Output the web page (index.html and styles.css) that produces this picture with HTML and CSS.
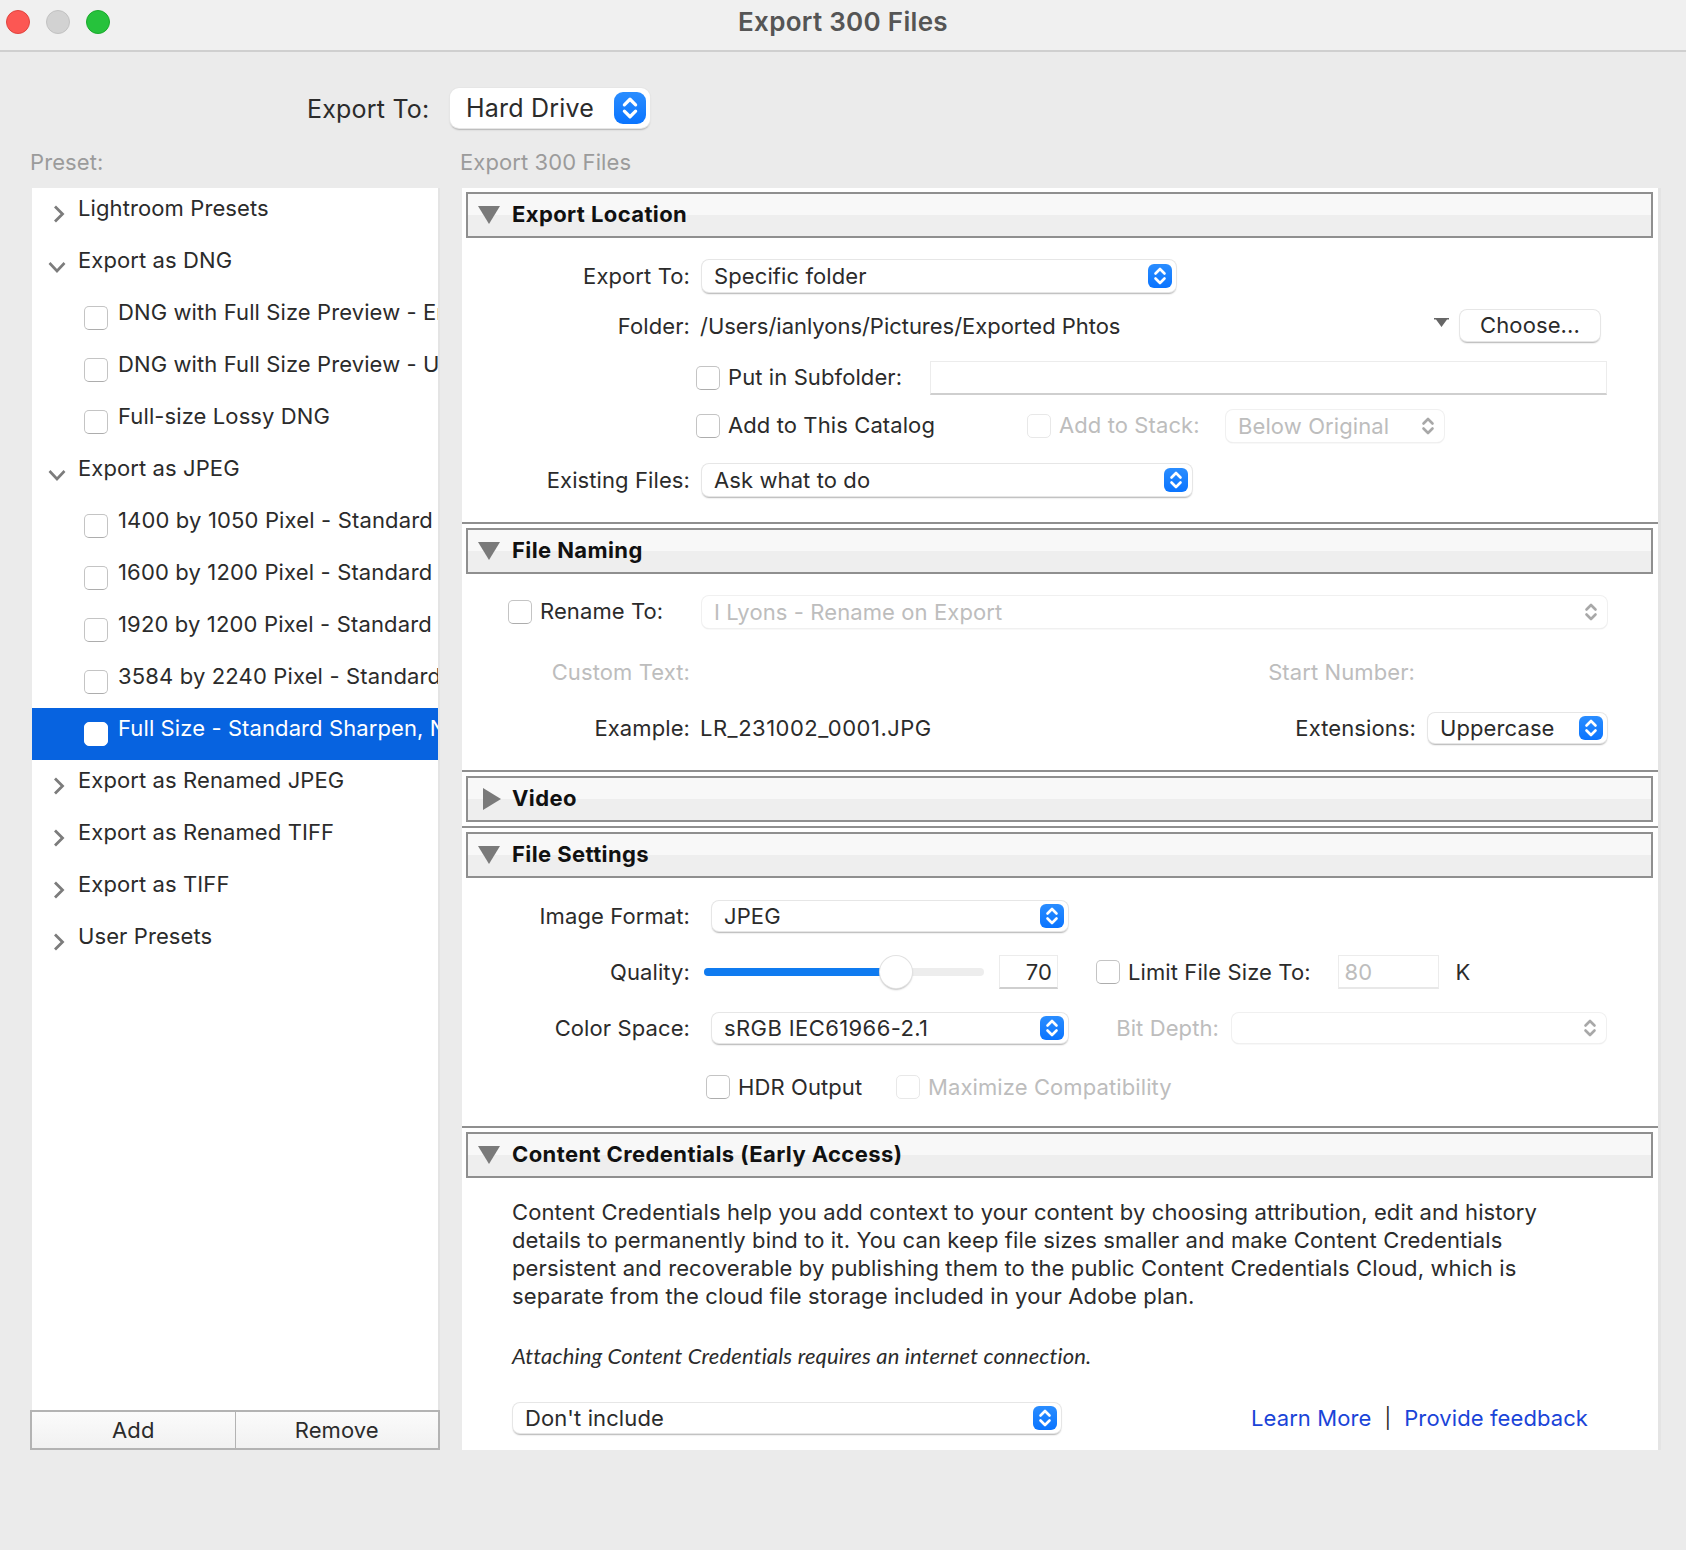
FILE: index.html
```html
<!DOCTYPE html>
<html lang="en">
<head>
<meta charset="utf-8">
<title>Export 300 Files</title>
<link rel="stylesheet" href="styles.css">
</head>
<body>
<svg class="defs" width="0" height="0">
  <symbol id="updown" viewBox="0 0 24 24"><path d="M7.5 9.5 12 5l4.500 4.500M7.500 14.500 12 19l4.500-4.500" fill="none" stroke="currentColor" stroke-width="2.600" stroke-linecap="round" stroke-linejoin="round"/></symbol>
  <symbol id="right" viewBox="0 0 12 18"><path d="M2 1.500 9.500 9 2 16.500" fill="none" stroke="currentColor" stroke-width="2.800"/></symbol>
  <symbol id="down" viewBox="0 0 18 12"><path d="M1.500 2 9 10l7.500-8" fill="none" stroke="currentColor" stroke-width="2.600"/></symbol>
  <symbol id="tri-d" viewBox="0 0 22 18"><path d="M0 0h22L11 18z" fill="currentColor"/></symbol>
  <symbol id="tri-r" viewBox="0 0 18 22"><path d="M0 0v22l18-11z" fill="currentColor"/></symbol>
  <symbol id="pop" viewBox="0 0 15 9"><path d="M0 0h15v1.500h-2L7.500 9 2 1.500H0z" fill="currentColor"/></symbol>
</svg>

<header class="titlebar">
  <div class="lights"><i class="light red"></i><i class="light grey"></i><i class="light green"></i></div>
  <div class="title">Export 300 Files</div>
</header>

<div class="export-row">
  <span class="export-label">Export To:</span>
  <div class="select big"><span class="grow">Hard Drive</span><span class="cap cap-big"><svg class="cap-ic"><use href="#updown"/></svg></span></div>
</div>

<div class="captions"><span class="cap-left">Preset:</span><span>Export 300 Files</span></div>

<main class="main">
  <aside class="left">
    <ul class="tree">
      <li class="node"><svg class="chev-r"><use href="#right"/></svg><span class="node-text">Lightroom Presets</span></li>
      <li class="node"><svg class="chev-d"><use href="#down"/></svg><span class="node-text">Export as DNG</span></li>
      <li class="leaf"><i class="check"></i><span class="leaf-text">DNG with Full Size Preview - Embedded</span></li>
      <li class="leaf"><i class="check"></i><span class="leaf-text">DNG with Full Size Preview - Uncompressed</span></li>
      <li class="leaf"><i class="check"></i><span class="leaf-text">Full-size Lossy DNG</span></li>
      <li class="node"><svg class="chev-d"><use href="#down"/></svg><span class="node-text">Export as JPEG</span></li>
      <li class="leaf"><i class="check"></i><span class="leaf-text digits">1400 by 1050 Pixel - Standard</span></li>
      <li class="leaf"><i class="check"></i><span class="leaf-text digits">1600 by 1200 Pixel - Standard</span></li>
      <li class="leaf"><i class="check"></i><span class="leaf-text digits">1920 by 1200 Pixel - Standard</span></li>
      <li class="leaf"><i class="check"></i><span class="leaf-text digits">3584 by 2240 Pixel - Standard Sharpen</span></li>
      <li class="leaf selected"><i class="check"></i><span class="leaf-text">Full Size - Standard Sharpen, No Resize</span></li>
      <li class="node"><svg class="chev-r"><use href="#right"/></svg><span class="node-text">Export as Renamed JPEG</span></li>
      <li class="node"><svg class="chev-r"><use href="#right"/></svg><span class="node-text">Export as Renamed TIFF</span></li>
      <li class="node"><svg class="chev-r"><use href="#right"/></svg><span class="node-text">Export as TIFF</span></li>
      <li class="node"><svg class="chev-r"><use href="#right"/></svg><span class="node-text">User Presets</span></li>
    </ul>
    <div class="addrem"><div class="ar-btn">Add</div><div class="ar-btn">Remove</div></div>
  </aside>

  <section class="panel">
    <div class="section">
      <div class="head"><svg class="tri"><use href="#tri-d"/></svg><span class="head-text">Export Location</span></div>
      <div class="body loc">
        <div class="row h34">
          <span class="lbl">Export To:</span>
          <div class="select w474"><span class="grow">Specific folder</span><span class="cap"><svg class="cap-ic"><use href="#updown"/></svg></span></div>
        </div>
        <div class="row h32 mt16 folder">
          <span class="lbl low">Folder:</span>
          <span class="path low">/Users/ianlyons/Pictures/Exported Phtos</span>
          <svg class="pop-tri"><use href="#pop"/></svg>
          <div class="btn">Choose...</div>
        </div>
        <div class="row h34 mt20 indent">
          <i class="check"></i><span class="ck-lbl up">Put in Subfolder:</span>
          <div class="input sub"></div>
        </div>
        <div class="row h34 mt14 indent">
          <i class="check"></i><span class="ck-lbl catalog up">Add to This Catalog</span>
          <i class="check off"></i><span class="ck-lbl dim stack up">Add to Stack:</span>
          <div class="select off w218"><span class="grow">Below Original</span><svg class="cap-ic plain"><use href="#updown"/></svg></div>
        </div>
        <div class="row h34 mt20">
          <span class="lbl">Existing Files:</span>
          <div class="select w490"><span class="grow">Ask what to do</span><span class="cap"><svg class="cap-ic"><use href="#updown"/></svg></span></div>
        </div>
      </div>
    </div>

    <div class="section">
      <div class="head"><svg class="tri"><use href="#tri-d"/></svg><span class="head-text">File Naming</span></div>
      <div class="body nam">
        <div class="row h34">
          <i class="check rename-ck"></i><span class="ck-lbl rename up">Rename To:</span>
          <div class="select off w905"><span class="grow">I Lyons - Rename on Export</span><svg class="cap-ic plain"><use href="#updown"/></svg></div>
        </div>
        <div class="row h34 mt26">
          <span class="lbl dim">Custom Text:</span>
          <span class="lbl-r dim">Start Number:</span>
        </div>
        <div class="row h32 mt23">
          <span class="lbl">Example:</span>
          <span class="path ex">LR_231002_0001.JPG</span>
          <span class="lbl-x">Extensions:</span>
          <div class="select w179"><span class="grow">Uppercase</span><span class="cap"><svg class="cap-ic"><use href="#updown"/></svg></span></div>
        </div>
      </div>
    </div>

    <div class="section">
      <div class="head"><svg class="tri tri-side"><use href="#tri-r"/></svg><span class="head-text">Video</span></div>
    </div>

    <div class="section">
      <div class="head"><svg class="tri"><use href="#tri-d"/></svg><span class="head-text">File Settings</span></div>
      <div class="body set">
        <div class="row h32">
          <span class="lbl">Image Format:</span>
          <div class="select w356 m23"><span class="grow">JPEG</span><span class="cap"><svg class="cap-ic"><use href="#updown"/></svg></span></div>
        </div>
        <div class="row h34 mt23">
          <span class="lbl">Quality:</span>
          <div class="slider"><div class="fill"></div><div class="thumb"></div></div>
          <div class="input num">70</div>
          <i class="check limit-ck"></i><span class="ck-lbl">Limit File Size To:</span>
          <div class="input kb">80</div>
          <span class="unit">K</span>
        </div>
        <div class="row h32 mt23">
          <span class="lbl">Color Space:</span>
          <div class="select w356 m23"><span class="grow srgb">sRGB IEC61966-2.1</span><span class="cap"><svg class="cap-ic"><use href="#updown"/></svg></span></div>
          <span class="bit dim">Bit Depth:</span>
          <div class="select off w374"><span class="grow"></span><svg class="cap-ic plain"><use href="#updown"/></svg></div>
        </div>
        <div class="row h24 mt31 indent2">
          <i class="check"></i><span class="ck-lbl hdr">HDR Output</span>
          <i class="check off"></i><span class="ck-lbl dim">Maximize Compatibility</span>
        </div>
      </div>
    </div>

    <div class="section">
      <div class="head"><svg class="tri"><use href="#tri-d"/></svg><span class="head-text">Content Credentials (Early Access)</span></div>
      <div class="body cred">
        <p class="para">Content Credentials help you add context to your content by choosing attribution, edit and history<br>details to permanently bind to it. You can keep file sizes smaller and make Content Credentials<br>persistent and recoverable by publishing them to the public Content Credentials Cloud, which is<br>separate from the cloud file storage included in your Adobe plan.</p>
        <p class="note">Attaching Content Credentials requires an internet connection.</p>
        <div class="row h32 cred-row">
          <div class="select w548"><span class="grow">Don't include</span><span class="cap"><svg class="cap-ic"><use href="#updown"/></svg></span></div>
          <a class="link first" href="#">Learn More</a><span class="sep">|</span><a class="link" href="#">Provide feedback</a>
        </div>
      </div>
    </div>
  </section>
</main>
</body>
</html>
```

FILE: styles.css
```css
* { box-sizing: border-box; }
html, body { margin: 0; padding: 0; }
body {
  width: 1686px;
  height: 1550px;
  overflow: hidden;
  background: #ebebeb;
  color: #2b2b2b;
  font-family: Inter, "Liberation Sans", sans-serif;
  font-size: 22px;
  letter-spacing: 0.1px;
  position: relative;
}
.defs { position: absolute; }
.titlebar {
  height: 52px;
  background: #f0f0f0;
  border-bottom: 2px solid #cfcfcf;
  display: flex;
  align-items: center;
  justify-content: center;
  position: relative;
}
.title { font-size: 26px; font-weight: 600; color: #555; margin-top: -8px; letter-spacing: 0.3px; }
.lights { position: absolute; left: 6px; top: 10px; display: flex; gap: 16px; }
.light { width: 24px; height: 24px; border-radius: 50%; display: block; }
.red { background: #fc5753; border: 1px solid #e0443e; }
.grey { background: #d2d2d2; border: 1px solid #c2c2c2; }
.green { background: #26c23c; border: 1px solid #1aaa2c; }

.export-row { display: flex; align-items: center; height: 40px; margin-top: 36px; padding-left: 307px; }
.export-label { font-size: 25px; width: 143px; margin-top: 2px; letter-spacing: 0.2px; }

.select {
  display: flex;
  align-items: center;
  height: calc(100% - 2px);
  background: #fff;
  border-radius: 7px;
  box-shadow: 0 0 0 1px #e6e6e6, 0 1.500px 1.500px 0 #b4b4b4;
  padding: 0 4px 0 12px;
}
.select.big { width: 200px; height: 100%; border-radius: 9px; padding: 0 4px 0 16px; font-size: 25px; letter-spacing: 0.2px; }
.grow { flex: 1; white-space: nowrap; }
.srgb { letter-spacing: 0.4px; }
.cap {
  width: 24px;
  height: 24px;
  border-radius: 6px;
  background: linear-gradient(#2a8dff, #0a74ff);
  color: #fff;
  display: flex;
  align-items: center;
  justify-content: center;
}
.cap-big { width: 32px; height: 32px; border-radius: 9px; }
.cap-ic { width: 24px; height: 24px; }
.cap-big .cap-ic { width: 30px; height: 30px; }
.plain { color: #a8a8a8; margin-right: 0; }
.select.off { color: #bdbdbd; box-shadow: 0 0 0 1px #f0f0f0, 0 1px 1.500px 0 #dcdcdc; }

.captions { display: flex; height: 26px; margin-top: 21px; padding-left: 30px; color: #9b9b9b; }
.cap-left { width: 430px; }

.main { display: flex; position: absolute; left: 30px; top: 188px; }
.left { width: 410px; height: 1262px; display: flex; flex-direction: column; }
.tree {
  list-style: none;
  margin: 0 0 0 2px;
  padding: 0;
  width: 406px;
  height: 1222px;
  background: #fff;
  overflow: hidden;
  box-shadow: 2px 0 0 #e4e4e4;
}
.node, .leaf { height: 52px; display: flex; white-space: nowrap; overflow: hidden; position: relative; }
.node-text, .leaf-text { line-height: 40px; }
.node-text { position: absolute; left: 46px; top: 0; }
.leaf-text { position: absolute; left: 86px; top: 0; }
.digits { letter-spacing: 0.15px; }
.chev-r { width: 12px; height: 18px; color: #7c7c7c; position: absolute; left: 21px; top: 17px; }
.chev-d { width: 18px; height: 12px; color: #7c7c7c; position: absolute; left: 16px; top: 21px; }
.leaf .check { position: absolute; left: 52px; top: 14px; }
.selected { background: #0763e0; color: #fff; }
.selected .check { border-color: #fff; }

.check {
  display: block;
  flex: none;
  width: 24px;
  height: 24px;
  background: #fff;
  border: 1px solid #c4c4c4;
  border-bottom-color: #adadad;
  border-radius: 5px;
}
.check.off { border-color: #e8e8e8; }

.addrem { display: flex; height: 40px; border: 2px solid #b3b3b3; background: linear-gradient(#fbfbfb, #f1f1f1); }
.ar-btn { flex: 1; display: flex; align-items: center; justify-content: center; }
.ar-btn + .ar-btn { border-left: 1px solid #b3b3b3; }

.panel { width: 1196px; height: 1262px; margin-left: 22px; background: #fff; box-shadow: 3px 0 0 #e4e4e4; }
.section { padding: 4px 5px 0 4px; }
.section + .section { border-top: 2px solid #8f8f8f; margin: 0; }
.section:nth-child(3) { padding-bottom: 4px; }
.head {
  height: 46px;
  margin-top: 0;
  border: 2px solid #8f8f8f;
  background: linear-gradient(#f8f8f8 50%, #eeeeee 50%);
  display: flex;
  align-items: center;
  padding-left: 10px;
}
.head-text { font-weight: 700; color: #111; letter-spacing: 0.4px; margin-bottom: 2px; }
.tri { width: 22px; height: 18px; color: #7a7a7a; margin-right: 12px; }
.tri-side { width: 18px; height: 22px; margin-left: 5px; margin-right: 11px; }

.body { margin: 0 -5px 0 -4px; }
.loc { height: 284px; padding-top: 21px; }
.nam { height: 196px; padding-top: 21px; }
.set { height: 248px; padding-top: 22px; }
.cred { height: 272px; padding-top: 20px; }

.row { display: flex; align-items: center; white-space: nowrap; }
.h24 { height: 24px; }
.h32 { height: 32px; }
.h34 { height: 34px; }
.mt14 { margin-top: 14px; }
.mt16 { margin-top: 16px; }
.mt20 { margin-top: 20px; }
.mt23 { margin-top: 23px; }
.mt26 { margin-top: 26px; }
.mt31 { margin-top: 31px; }
.indent { padding-left: 234px; }
.indent2 { padding-left: 244px; }
.up { margin-bottom: 2px; }
.low { margin-top: 2px; }

.lbl { width: 228px; text-align: right; margin-right: 12px; flex: none; }
.dim { color: #bdbdbd; }
.path { margin-left: -2px; letter-spacing: -0.03px; }
.ck-lbl { margin-left: 8px; }
.w474 { width: 474px; }
.w490 { width: 490px; }
.w218 { width: 218px; }
.w905 { width: 905px; }
.w179 { width: 179px; }
.w356 { width: 356px; }
.w374 { width: 374px; }
.w548 { width: 548px; }
.m23 { margin-left: 10px; }

.folder { padding-right: 58px; }
.pop-tri { width: 15px; height: 9px; color: #666; margin-left: auto; margin-right: 11px; margin-bottom: 6px; flex: none; }
.btn {
  width: 140px;
  height: 31px;
  flex: none;
  display: flex;
  align-items: center;
  justify-content: center;
  background: #fff;
  border-radius: 7px;
  box-shadow: 0 0 0 1px #e6e6e6, 0 1.500px 1.500px 0 #b4b4b4;
}
.input { background: #fff; border: 1px solid #ececec; border-bottom: 2px solid #cfcfcf; height: 34px; }
.sub { width: 677px; margin-left: 28px; }
.catalog { width: 299px; }
.stack { width: 167px; }

.rename-ck { margin-left: 46px; }
.rename { width: 162px; }
.lbl-r { margin-left: 539px; width: 174px; text-align: right; }
.ex { width: 542px; letter-spacing: 0.5px; }
.lbl-x { width: 174px; text-align: right; margin-left: 0; margin-right: 12px; flex: none; }

.slider { width: 280px; height: 8px; margin-left: 2px; background: #ededed; border-radius: 4px; position: relative; flex: none; }
.fill { width: 178px; height: 8px; background: #0f7bf0; border-radius: 4px 0 0 4px; }
.thumb {
  position: absolute;
  left: 176px;
  top: -12px;
  width: 32px;
  height: 32px;
  border-radius: 50%;
  background: #fff;
  box-shadow: 0 0 0 1px #e2e2e2, 0 1.500px 2px #aaa;
}
.num { width: 59px; margin-left: 15px; text-align: right; padding-right: 5px; line-height: 32px; flex: none; }
.limit-ck { margin-left: 38px; }
.kb { width: 101px; margin-left: 27px; color: #bdbdbd; padding-left: 6px; line-height: 32px; border-bottom-color: #e8e8e8; flex: none; }
.unit { margin-left: 17px; }
.bit { width: 151px; text-align: right; margin-right: 13px; }
.hdr { width: 158px; }

.para { margin: 0 0 0 50px; line-height: 28px; letter-spacing: 0.12px; }
.note { margin: 32px 0 32px 50px; line-height: 28px; font-style: italic; font-family: Lato, Inter, sans-serif; letter-spacing: 0.16px; }
.cred-row { padding-left: 51px; }
.link { color: #1a44d8; text-decoration: none; }
.first { margin-left: 190px; }
.sep { margin: 0 13px; font-size: 20px; }
```
